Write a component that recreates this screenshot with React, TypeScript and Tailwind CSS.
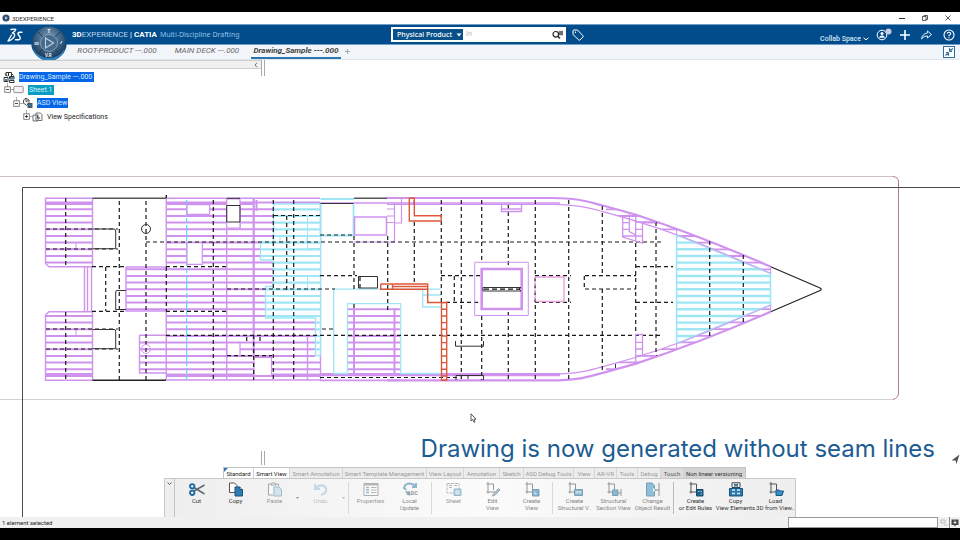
import type { ReactNode } from 'react';
import clsx from 'clsx';

// ─── Drawing geometry ────────────────────────────────────────────────────────

const STEP = 20 / 3;
const PURPLE = '#cf93ee';
const CYAN = '#9fe6f5';
const ORANGE = '#e0583a';

// [x1, x2, y1, y2]
type Area = [number, number, number, number];

// Every plank sits on one shared grid, so areas only need their bounds.
function planks(areas: Area[]) {
  let d = '';
  for (const [x1, x2, y1, y2] of areas) {
    for (let k = -1; k <= 25; k++) {
      const y = 209.3 + k * STEP;
      if (y >= y1 && y <= y2) d += `M${x1} ${y.toFixed(1)}H${x2}`;
    }
  }
  return d;
}

const PURPLE_PLANKS: Area[] = [
  [45, 92.5, 198, 266],
  [45, 92.5, 312, 380],
  [126, 166, 267, 311],
  [166, 320, 198, 206],
  [166, 273, 206, 241],
  [166, 260, 242, 260],
  [166, 273, 260, 286],
  [166, 265, 286, 318],
  [166, 315, 318, 356],
  [166, 320, 356, 377],
  [139.5, 166, 336, 373],
  [347.5, 400.5, 308, 374],
];

const CYAN_PLANKS: Area[] = [
  [273.5, 320.5, 207, 242],
  [260.5, 320.5, 242, 260],
  [273.5, 320.5, 260, 286],
  [265.5, 320.5, 286, 318],
  [315.5, 320.5, 318, 355],
];

// vertical frames: x, y1, y2
const FRAMES = [
  [65.7, 198, 267], [65.7, 312, 380], [105.7, 267, 311], [119.3, 201, 380], [146, 201, 380],
  [166.3, 267, 311], [213.3, 200, 380], [253.7, 335, 380], [273.3, 200, 380], [286.7, 216, 290],
  [293.7, 200, 380], [354, 236, 290], [354, 304, 310], [387.7, 236, 310], [414.3, 222, 284],
  [414.3, 200, 206], [441.3, 200, 302], [454.3, 276, 302], [461.3, 200, 380], [481.7, 200, 262],
  [481.7, 316, 380], [508.3, 205, 268], [508.3, 312, 380], [535.3, 200, 380], [568.7, 200, 380],
  [584.3, 276, 289], [602.3, 206, 276], [602.3, 289, 372], [635.7, 243, 335], [656, 222, 356],
  [709.7, 241, 337], [743.3, 255, 323],
];

// horizontal frames: y, x1, x2
const DECKS = [
  [229, 46, 118], [249, 46, 118], [329, 46, 118], [349, 46, 118],
  [266.7, 92, 126], [266.7, 166, 226], [311.3, 92, 126], [311.3, 166, 226],
  [242, 146, 662], [335.3, 166, 662], [289, 227, 335], [215.5, 274, 320],
  [275.7, 320, 357], [329, 322, 335], [355.7, 227, 272], [235, 320, 354],
  [275.7, 441, 482], [302.3, 446, 482], [275.7, 535, 571], [302.3, 535, 571],
  [275.7, 585, 636], [289, 585, 636], [266.7, 636, 673], [302.3, 636, 673],
  [377.5, 320, 460],
];

const OUTER = 'M387 198H552C580 198 590 202.500 603 205.500L636 214.800Q700 236 770.700 266.700';
const INNER = 'M387 204.300H552C580 205 590 208 603 211.700Q660 227 710 247.700L770.700 273.300';
const BAND = 'M560 198C580 198 590 202 603 205.500L636 214.800Q700 236 770.700 266.700V273.300L710 247.700Q660 227 603 211.700L560 205Z';

function HullSide() {
  return (
    <>
      <path d={OUTER} strokeWidth="2.200" />
      <path d={INNER} strokeWidth="1.2" />
      <path d="M320 203H560" strokeWidth="1.6" />
      <path d="M676.600 228.300V235" />
      <g clipPath="url(#band)">
        <path d={planks([[606, 771, 209, 275]])} strokeWidth="1.8" />
      </g>
    </>
  );
}

function DeckPlan() {
  return (
    <svg viewBox="0 60 960 457" className="col-start-1 row-start-1 w-full self-start" fill="none" role="img" aria-label="Deck plan">
      <defs>
        <clipPath id="band"><path d={BAND} /></clipPath>
        <clipPath id="bow"><path d="M676.600 235L770.700 273.300V305L676.600 343.500Z" /></clipPath>
      </defs>

      {/* sheet border and view frame */}
      <path d="M0 176.500H893" stroke="#cbbfc0" />
      <path d="M893 176.500Q898.500 177 898.500 182V393Q898.500 398 893 399.500" stroke="#b5798a" />
      <path d="M0 399.500H893" stroke="#d2d2d2" />
      <path d="M22.500 517V187.500H960" stroke="#4a4a4a" />

      {/* stern and midship planking */}
      <g stroke={PURPLE}>
        <path d={planks(PURPLE_PLANKS)} strokeWidth="2" />
        <path d="M45.500 198.300H92.500V266.700H49L45.500 263.500ZM49 311.700H92.500V380.300H45.500V315ZM84.500 267V311M87.500 267V311M91.500 267V311" strokeWidth="1.4" />
        <path d="M45 204H92M45 374H92M166 204H253M166 374.500H320" strokeWidth="2" />
        <path d="M166.300 198.300H320M166.300 380H320M166.300 198V267M166.300 311V380M126 267V311H166M126 267H166M226.700 198V380M240 222V228M307.500 336V380M320.500 205V380M139.500 335.300H166M139.500 335V373H166" strokeWidth="1.4" />
        <path d="M253.700 198V357" strokeWidth="2.200" />
        <path d="M256.500 200V211" strokeWidth="2" />
        <path d="M66 242.500H76V248.500H66M66 329.500H76V335" />
        <path d="M354 308V374M394.500 308V374" strokeWidth="2" />
      </g>

      {/* hull */}
      <g stroke={PURPLE}>
        <HullSide />
        <g transform="translate(0 578.4) scale(1 -1)"><HullSide /></g>
        <path d="M320 374H560M320 380.300H400" strokeWidth="1.800" />
      </g>
      <path d="M92.500 198.300H166M354 198.300H387" stroke="#555" strokeWidth="1.4" />
      <path d="M92.500 380.300H166M166.300 195V198" stroke="#222" strokeWidth="1.4" />

      {/* cyan panels */}
      <g stroke={CYAN}>
        <path d="M273.500 204H320.500V355.500H315.500V318H265.500V286.500H273.500V260H260.500V242H273.500Z" fill="#fff" strokeWidth="1.300" />
        <path d={planks(CYAN_PLANKS)} strokeWidth="2.200" />
        <path d="M307.500 216V248.500H320M280 237V242H307V237M307.500 276V289" />
        <path d="M320.500 199H354M320.500 235.500H353.500V203M320.500 203V235" strokeWidth="1.800" />
        <path d="M333.700 289.200H422.700V307H441M422.700 295H441M425 289.200H441M333.700 289V373.500H347.500V303.700H400.700V373.500H441" strokeWidth="1.300" />
        <g clipPath="url(#bow)">
          <path d={planks([[676, 771, 235, 345]])} strokeWidth="2.400" />
        </g>
        <path d="M676.600 235V343.500M770.500 273.500V305" strokeWidth="1.600" />
        <path d="M676.600 235L770.500 273.500M676.600 343.500L770.500 305" stroke="#a9c9f2" strokeWidth="1.200" />
      </g>
      <path d="M186.700 200V380" stroke="#62d2f7" strokeWidth="1.200" strokeDasharray="16 2 5 2" />

      {/* openings */}
      <g fill="#fff" stroke={PURPLE} strokeWidth="1.200">
        <path d="M187 204.700H209.700V214.300H187ZM187 242.700H202.300V264.300H187ZM227 343H240V355.700H227ZM254 357.500H271.500V375.500H254Z" />
        <path d="M226.700 199H240V228H226.700Z" />
        <path d="M387 198.300H401.500V223H394.500M394.500 204V242H354M387 209H394M387 216H394M387 222.500H394" fill="none" />
        <path d="M354.500 217H386.500V235H354.500Z" strokeWidth="1.600" />
      </g>

      {/* dashed structure */}
      <g stroke="#1a1a1a" strokeWidth="1.200" strokeDasharray="4 3">
        <path d={FRAMES.map(([x, a, b]) => `M${x} ${a}V${b}`).join('')} />
        <path d={DECKS.map(([y, a, b]) => `M${a} ${y}H${b}`).join('')} />
        <path d="M246.700 337V341M260 337V341M360 277V288" />
      </g>

      <g stroke="#333">
        <path d="M226.700 205.500H240V222H226.700ZM226.700 198.300H240" />
        <path d="M92.500 229H114Q115.700 229 115.700 231V248.700H92.500M92.500 329.500H114Q115.700 329.500 115.700 331V348.700H92.500" />
        <path d="M126 290.500H117Q115.700 290.500 115.700 292V309.500H126" />
        <circle cx="146" cy="229" r="4.500" />
        <path d="M320.500 203.500H353.500M358.500 276.500H377.500V288H358.500Z" />
        <path d="M455.500 341V346.200H483.500V341M456 380V375.500H483.500V380M468 376V379M615.500 364V368" />
      </g>
      <circle cx="146" cy="349" r="4.500" stroke={PURPLE} />

      {/* hatch and deck fittings */}
      <g stroke={PURPLE}>
        <path d="M474.700 262.300H528.300V315.500H474.700Z" />
        <path d="M481.700 269H521.700V309H481.700Z" strokeWidth="2.600" />
        <path d="M501.500 205V211.500H521.500V205M501.500 209H521.500" strokeWidth="1.400" />
        <path d="M622.700 216V237L642.500 243V222M622.700 222.700H629.300M622.700 229.300H629.300M629.300 214V231.500L635.700 235M635.700 216V242M635.700 222H656M635.700 229.300H642.500M622.700 236H642.500" strokeWidth="1.300" />
        <path d="M635.700 362V334.500H642.500V356M635.700 342.300H642.500M635.700 349H642.500M635.700 355.700H656" strokeWidth="1.300" />
      </g>
      <path d="M483 287.500H521L519 289L521 291H483Z" stroke="#333" />
      <path d="M484 289.200H520" stroke="#111" strokeWidth="1.200" strokeDasharray="5 3" />
      <path d="M535 277H564V301.500H535Z" stroke="#e8a3dc" strokeWidth="1.400" />
      <path d="M535 279V302" stroke="#333" strokeDasharray="2 5" />

      {/* seam bulkheads */}
      <g stroke={ORANGE} strokeWidth="1.400">
        <path d="M409.300 198.300H414.300V215.700H441.300V221H409.300Z" />
        <path d="M380.700 284H427.700V302.500H446.700V380.300H441.500V302.500M427.700 289.300H380.700V284M392.500 284V289M392.500 286.500H427" />
        <path d={planks([[441.5, 446.7, 302, 380]])} />
      </g>

      {/* bow tip */}
      <path d="M770.700 266.700L819 287.500Q823.500 289.200 819 291L770.700 311.700" stroke="#222" strokeWidth="1.200" />
      <path d="M770.700 266.700V311.700" stroke={PURPLE} strokeDasharray="7 31" />
    </svg>
  );
}

// ─── Top bars ────────────────────────────────────────────────────────────────

function TitleBar() {
  return (
    <header className="flex h-[12px] items-center bg-white pl-[2px] text-[#333]">
      <svg viewBox="0 0 10 10" className="mr-[2px] size-[8px]">
        <circle cx="5" cy="5" r="4.500" fill="#34506e" />
        <path d="M4 3L7 5L4 7Z" fill="#dce7f1" />
      </svg>
      <span className="text-[6px]">3DEXPERIENCE</span>
      <div className="ml-auto flex items-center gap-[17px] pr-[9px] text-[#333]">
        <button aria-label="Minimize"><svg viewBox="0 0 6 6" className="size-[6px]" fill="none" stroke="currentColor"><path d="M0 3.500H6" /></svg></button>
        <button aria-label="Restore"><svg viewBox="0 0 6 6" className="size-[6px]" fill="none" stroke="currentColor"><path d="M.5 1.500H4V5.500H.5ZM2 1.500V.5H5.500V4.500H4" strokeWidth=".8" /></svg></button>
        <button aria-label="Close"><svg viewBox="0 0 6 6" className="size-[6px]" fill="none" stroke="currentColor"><path d="M.5 .5L5.500 5.500M5.500 .5L.5 5.500" strokeWidth=".8" /></svg></button>
      </div>
    </header>
  );
}

function Compass() {
  return (
    <button aria-label="Compass" className="absolute top-0 left-[31px] z-10">
      <svg viewBox="0 0 36 36" className="size-[36px]" fill="none">
        <defs>
          <radialGradient id="ring" cx=".5" cy=".35" r=".65">
            <stop offset="0" stopColor="#7d9cb8" />
            <stop offset=".55" stopColor="#3d6385" />
            <stop offset="1" stopColor="#16324f" />
          </radialGradient>
        </defs>
        <circle cx="18" cy="18" r="17" fill="url(#ring)" stroke="#0d4a80" strokeWidth="1.400" />
        <path d="M2.500 25A17 17 0 0 0 33.500 25Q28 33.500 18 33.500Q8 33.500 2.500 25" fill="#2b86c4" stroke="#2b86c4" />
        <path d="M7 7L13 13M29 7L23 13M7 29L13 23M29 29L23 23" stroke="#1d3a57" />
        <circle cx="18" cy="18" r="8.500" fill="#456a8c" stroke="#8faac2" strokeWidth=".8" />
        <path d="M14.500 13L22.500 18L14.500 23Z" stroke="#c3d2df" strokeWidth="1.100" />
        <path d="M16.500 4.500H19.500M18 4.500V8M29.500 19L31 16" stroke="#e5edf4" />
        <text x="3" y="20" fontSize="4" fontWeight="700" fill="#e5edf4">3D</text>
        <text x="14" y="32" fontSize="4.500" fontWeight="700" fill="#e5edf4">V.R</text>
      </svg>
    </button>
  );
}

function TopBar() {
  return (
    <div className="relative flex h-[21px] items-center border-y border-[#6f9fc6] bg-[#034c8c] text-white">
      <svg viewBox="0 0 16 14" className="ml-[7px] h-[14px] w-[16px]" fill="none" stroke="#fff" strokeLinecap="round" strokeLinejoin="round" role="img" aria-label="DS">
        <path d="M4 1.500Q7.500 .8 8.800 1.400Q8.500 3 5.500 5" strokeWidth="1.300" />
        <path d="M5.500 5Q8.500 5.500 7.300 8.500Q5.500 12 1 13L4.500 7" strokeWidth="1.300" />
        <path d="M15 4.300Q11.500 4 10.900 5.200Q10.800 6.400 12.300 8Q14.200 10.800 12 11.700H8.500" strokeWidth="1.400" />
      </svg>
      <Compass />
      <h1 className="ml-[49px] text-[8px] leading-[12px] whitespace-nowrap text-[#b9d8f0]">
        <b className="text-white">3D</b>EXPERIENCE <span className="text-white">|</span> <b className="text-white">CATIA</b>
        <span className="ml-[3px] font-['Noto_Sans',sans-serif] text-[7px] text-[#8fc3e6]">Multi-Discipline Drafting</span>
      </h1>

      <form className="mr-[6px] ml-auto flex h-[15px] w-[175px] items-center bg-white pl-[2px]">
        <select aria-label="Search type" className="h-[11px] w-[70px] shrink-0 appearance-none bg-[#075089] pl-[4px] font-['Noto_Sans',sans-serif] text-[7px] leading-[11px] font-medium text-white">
          <option>Physical Product</option>
        </select>
        <svg viewBox="0 0 6 4" className="pointer-events-none -ml-[7px] h-[4px] w-[6px] shrink-0"><path d="M.5 .5H5.500L3 3.500Z" fill="#fff" /></svg>
        <input aria-label="Search" placeholder="In" className="min-w-0 flex-1 pl-[4px] text-[7px] text-[#333] outline-none placeholder:text-[#b5b5b5]" />
        <button type="button" aria-label="Advanced search" className="mr-[3px]">
          <svg viewBox="0 0 11 9" className="h-[9px] w-[11px]" fill="none" stroke="#222">
            <circle cx="3.800" cy="4.300" r="2.800" strokeWidth="1.200" />
            <path d="M5.800 6.200L8 8.500" strokeWidth="1.400" />
            <path d="M7 2H11M7 4H11M8 .8V5.500M10 .8V5.500" strokeWidth=".8" />
          </svg>
        </button>
      </form>
      <button aria-label="Tags" className="mr-[236px]">
        <svg viewBox="0 0 12 12" className="size-[12px]" fill="none" stroke="#fff" strokeLinejoin="round">
          <path d="M1 2Q1 1 2 1L5.500 1L11 6.800Q11.500 7.400 11 8L8 11Q7.400 11.400 6.800 11L1 5.500Z" />
          <circle cx="3.400" cy="3.300" r=".7" fill="#fff" stroke="none" />
        </svg>
      </button>
      <button className="mt-[8px] flex items-center gap-[2px] text-[7px] leading-[10px] font-medium whitespace-nowrap text-[#d8e8f5]">
        Collab Space
        <svg viewBox="0 0 6 4" className="h-[4px] w-[6px]" fill="none" stroke="#fff"><path d="M.5 .8L3 2.800L5.500 .8" /></svg>
      </button>
      <div className="flex items-center gap-[10px] pr-[5px] pl-[7px]">
        <button aria-label="Profile">
          <svg viewBox="0 0 16 13" className="h-[13px] w-[16px]" fill="none" stroke="#fff">
            <circle cx="6" cy="7" r="4.800" />
            <circle cx="6" cy="5.600" r="1.500" fill="#fff" stroke="none" />
            <path d="M3 9.800Q3.500 7.600 6 7.600Q8.500 7.600 9 9.800Z" fill="#fff" stroke="none" />
            <circle cx="12.500" cy="3.500" r="3" fill="#c9cbdc" stroke="none" />
          </svg>
        </button>
        <button aria-label="Add"><svg viewBox="0 0 10 10" className="-ml-[2px] size-[10px]" stroke="#fff" strokeWidth="1.600"><path d="M5 0V10M0 5H10" /></svg></button>
        <button aria-label="Share">
          <svg viewBox="0 0 13 11" className="h-[10px] w-[13px]" fill="none" stroke="#fff" strokeLinejoin="round"><path d="M7.500 1L12 5L7.500 8.800V6.500Q3.500 6.300 1 9.800Q2 4 7.500 3.300Z" /></svg>
        </button>
        <button aria-label="Help">
          <svg viewBox="0 0 12 12" className="size-[12px]" fill="none" stroke="#fff">
            <circle cx="6" cy="6" r="5" strokeWidth="1.100" />
            <path d="M4.300 4.800Q4.300 3.200 6 3.200Q7.700 3.200 7.700 4.700Q7.700 5.500 6 6.400V7.200M6 8.200V9.300" strokeWidth="1.100" />
          </svg>
        </button>
      </div>
    </div>
  );
}

const DOCS = [
  { name: 'ROOT-PRODUCT ---.000', className: 'w-[98px]' },
  { name: 'MAIN DECK ---.000', className: 'w-[82px]' },
];

function DocTabs() {
  return (
    <nav className="flex h-[15px] items-end border-b border-[#dfe5ec] bg-[#f2f5f9] pl-[68px] text-[8px] leading-[12px] whitespace-nowrap text-[#666] italic">
      {DOCS.map((d) => (
        <button key={d.name} className={clsx('h-[14px] border-b-2 border-transparent text-center', d.className)}>{d.name}</button>
      ))}
      <button className="ml-[3px] h-[14px] w-[90px] border-b-2 border-[#2a77b0] text-center font-bold text-[#444]">Drawing_Sample ---.000</button>
      <button aria-label="New tab" className="mb-[4px] ml-[3px]">
        <svg viewBox="0 0 7 7" className="size-[7px]" stroke="#999"><path d="M3.500 1V6M1 3.500H6" strokeWidth=".8" /></svg>
      </button>
      <button aria-label="Full screen" className="mr-[5px] mb-px ml-auto">
        <svg viewBox="0 0 12 12" className="size-[12px]" fill="none" stroke="#2d6d9e">
          <rect x=".5" y=".5" width="11" height="11" fill="#fff" />
          <path d="M6.500 5.500V3L8 4.200L9.800 2.500M6.500 5.500H9M5.500 6.500V9L4.200 7.800L2.500 9.500M5.500 6.500H3" strokeWidth="1.200" />
        </svg>
      </button>
    </nav>
  );
}

// ─── Feature tree ────────────────────────────────────────────────────────────

function Toggle({ open }: { open: boolean }) {
  return (
    <svg viewBox="0 0 11 13" className="h-[13px] w-[11px]" fill="none" stroke="#666" strokeWidth=".8">
      <path d="M3.500 0V4M6.500 6.500H11" stroke="#999" />
      <rect x=".8" y="3.800" width="5.500" height="5.500" fill="#fff" />
      <path d={open ? 'M2 6.500H5' : 'M2 6.500H5M3.500 5V8'} stroke="#222" />
    </svg>
  );
}

function Tree() {
  return (
    <ul className="pt-px text-[7px] leading-[10px] whitespace-nowrap">
      <li className="flex h-[13px] items-center pl-[3px]">
        <svg viewBox="0 0 12 12" className="mr-[4px] size-[12px]" fill="none" stroke="#333">
          <path d="M3 5V1.500H8.500V5M5.500 1V5M1 6.500H5V10.500H1ZM6.500 5.500H11V8H6.500ZM6.500 9.500H11V11.500H6.500Z" />
          <path d="M2 2.500L4.500 5.500M8 2L10.500 4.500" />
          <path d="M7 6H10.500V7.500H7ZM2 8H4V10H2Z" fill="#2d7fb2" stroke="none" />
        </svg>
        <button className="bg-[#0566e8] pr-[2px] text-[#dceaff]">Drawing_Sample ---.000</button>
      </li>
      <li className="flex h-[13px] items-center pl-[4px]">
        <Toggle open />
        <svg viewBox="0 0 14 10" className="-ml-[2px] h-[9px] w-[11px]"><rect x="1" y="1" width="12" height="8" rx="1" fill="#f4f0f4" stroke="#777" /></svg>
        <button className="ml-[4px] bg-[#0a9dc4] px-px text-[#d9f3fa]">Sheet.1</button>
      </li>
      <li className="flex h-[14px] items-center pl-[13px]">
        <Toggle open />
        <svg viewBox="0 0 11 12" className="-ml-[2px] h-[12px] w-[11px]" fill="none" stroke="#555">
          <path d="M1.500 3L4 1L7 3V6L4.500 8.500L1.500 6ZM4 1V4.500L7 3" fill="#eee" />
          <rect x="6" y="6.500" width="4" height="4" fill="#2f7496" />
        </svg>
        <button className="ml-[4px] bg-[#0566e8] pr-px text-[#dceaff]">ASD View</button>
      </li>
      <li className="flex h-[13px] items-center pl-[23px]">
        <Toggle open={false} />
        <svg viewBox="0 0 11 10" className="-ml-[2px] h-[10px] w-[11px]" fill="#f5f5f5" stroke="#777">
          <path d="M1 3H6V9H1ZM4 1H8.500L10 2.500V8.500H4Z" />
          <path d="M5.500 3.500V6H8" fill="none" stroke="#444" />
        </svg>
        <button className="ml-[4px] text-[#222]">View Specifications</button>
      </li>
    </ul>
  );
}

// ─── Ribbon ──────────────────────────────────────────────────────────────────

const RIBBON_TABS = [
  { label: 'Standard', className: 'w-[30px] bg-white text-[#222]' },
  { label: 'Smart View', className: 'w-[36px] bg-white text-[#222]' },
  { label: 'Smart Annotation', className: 'w-[53px]' },
  { label: 'Smart Template Management', className: 'w-[84px]' },
  { label: 'View Layout', className: 'w-[37px]' },
  { label: 'Annotation', className: 'w-[36px]' },
  { label: 'Sketch', className: 'w-[24px]' },
  { label: 'ASD Debug Tools', className: 'w-[50px]' },
  { label: 'View', className: 'w-[21px]' },
  { label: 'AR-VR', className: 'w-[22px]' },
  { label: 'Tools', className: 'w-[21px]' },
  { label: 'Debug', className: 'w-[23px]' },
  { label: 'Touch', className: 'w-[23px] bg-[#dcdcdc] text-[#555]' },
  { label: 'Non linear versioning', className: 'w-[61px] bg-[#d3d3d3] text-[#333]' },
];

const AXES = <path d="M3 0V10H10M1.500 2H8.500V8M1.500 10H3M3 10V11.500" stroke="#555" />;

const ICONS: Record<string, ReactNode> = {
  cut: (
    <>
      <path d="M15.500 3L5 9M15.500 12L5 5.500" stroke="#5d6b76" strokeWidth="1.500" />
      <circle cx="3.200" cy="4.300" r="2.200" stroke="#1e6c9e" strokeWidth="1.900" />
      <circle cx="3.200" cy="10.800" r="2.200" stroke="#1e6c9e" strokeWidth="1.900" />
    </>
  ),
  copy: (
    <>
      <path d="M1.500 1H6.500L9 3.500V10.500H1.500Z" fill="#fff" stroke="#555" />
      <path d="M7 5H12L14.500 7.500V14H7Z" fill="#2d7db3" stroke="#1c5379" />
      <path d="M12 5V7.500H14.500" fill="#fff" stroke="#1c5379" />
    </>
  ),
  paste: (
    <>
      <path d="M4 2H1.500V13H6M9 2H11.500V4M4 3Q4 .8 6.500 .8Q9 .8 9 3Z" fill="#fff" stroke="#555" />
      <path d="M7 5H12L14.500 7.500V14H7Z" fill="#b5d3e6" stroke="#4e86ab" />
    </>
  ),
  undo: <path d="M2 2V7H7M2.500 6.500Q6 2.500 10 3.500Q14 5 13 9Q12 12 8 13" stroke="#5a97c0" strokeWidth="2.200" />,
  properties: (
    <>
      <path d="M1 1.500H15V13.500H1Z" fill="#fff" stroke="#666" />
      <path d="M1 1.500H15V3.500H1Z" fill="#777" />
      <path d="M3 5.500H6M3 8H6M3 10.500H6" stroke="#3b82ae" strokeWidth="1.600" />
      <path d="M8 5.500H13.500M8 8H13.500M8 10.500H13.500" stroke="#777" />
    </>
  ),
  update: (
    <>
      <path d="M2 7Q2 2 7 1.500Q11 1.500 13 4M14 1V5H10M2 5L4 8M4 9Q5 12 8 13" stroke="#4a8cb5" strokeWidth="2" />
      <text x="5" y="13" fontSize="5.500" fontWeight="700" fill="#555">ADC</text>
    </>
  ),
  sheet: (
    <>
      <path d="M1 1.500H13V11H1ZM3 3.500H6M8 3.500H11M3 5.500H6" stroke="#777" strokeDasharray="3 1" />
      <path d="M8 7H15V13.500H8Z" fill="#6da8cc" stroke="#3f7da5" />
      <path d="M10 9V11.500H13V9Z" stroke="#e6f1f8" strokeWidth=".8" />
    </>
  ),
  edit: (
    <>
      {AXES}
      <path d="M8 12.500L13.500 6.500L15 8L9.500 13.500L7.500 14Z" fill="#6fa9cf" stroke="#555" strokeWidth=".8" />
    </>
  ),
  view: (
    <>
      {AXES}
      <path d="M8.500 7.500H15V14H8.500Z" fill="#3a86b5" stroke="#28678f" />
      <path d="M10 12H13M11 9.500V12" stroke="#dcebf5" strokeWidth=".8" />
    </>
  ),
  structural: (
    <>
      {AXES}
      <path d="M7.500 7.500H15.500V13.500H7.500Z" fill="#4a90bb" stroke="#28678f" />
      <path d="M8.500 10H14.500M10 9V12M13 9V12" stroke="#dcebf5" strokeWidth=".8" />
    </>
  ),
  section: (
    <>
      {AXES}
      <path d="M6.500 8H12V13.500H6.500Z" fill="#4a90bb" stroke="#28678f" />
      <path d="M12 11H15M15 7V14" stroke="#555" />
    </>
  ),
  change: (
    <>
      <path d="M1.500 1H7L9.500 3.500V14H1.500Z" fill="#4f9cc6" stroke="#28678f" />
      <path d="M10 8H14M14 1V14" stroke="#777" strokeWidth="1.300" />
      <path d="M8 5L11 8L8 11" fill="#cfe3ef" stroke="#28678f" strokeWidth=".8" />
    </>
  ),
  rules: (
    <>
      {AXES}
      <path d="M8.500 7.500H15V14H8.500Z" fill="#1c628f" stroke="#174c70" />
      <path d="M10 9.500H11.500M12.500 12H14M12.500 9.500H14" stroke="#9fd0ea" />
    </>
  ),
  elements: (
    <>
      <path d="M4 .8H12V5.500H4Z" fill="#fff" stroke="#444" />
      <path d="M6 2L10 4.500M10 2L6 4.500" stroke="#1c628f" strokeWidth="1.300" />
      <path d="M1.500 6.500H14.500V14H1.500Z" fill="#2b7aad" stroke="#1b567f" />
      <path d="M4 8H12M4 11.500H12" stroke="#d9ebf6" strokeWidth="1.500" strokeDasharray="3 2" />
    </>
  ),
  load: (
    <>
      {AXES}
      <path d="M8 8H11L12 9H15.500L14 13.500H8Z" fill="#3a8fc4" stroke="#1b567f" />
    </>
  ),
};

type Tool = { icon: string; lines: string[]; tone: string; menu?: boolean };

const GROUPS: { className: string; tools: Tool[] }[] = [
  {
    className: 'w-[173px]',
    tools: [
      { icon: 'cut', lines: ['Cut'], tone: 'text-[#333]' },
      { icon: 'copy', lines: ['Copy'], tone: 'text-[#333]' },
      { icon: 'paste', lines: ['Paste'], tone: 'text-[#333] opacity-50', menu: true },
      { icon: 'undo', lines: ['Undo'], tone: 'text-[#333] opacity-30', menu: true },
    ],
  },
  {
    className: 'w-[83px] border-l border-[#d9d9d9]',
    tools: [
      { icon: 'properties', lines: ['Properties'], tone: 'text-[#333] opacity-50' },
      { icon: 'update', lines: ['Local', 'Update'], tone: 'text-[#333] opacity-60' },
    ],
  },
  {
    className: 'w-[121px] border-l border-[#d9d9d9]',
    tools: [
      { icon: 'sheet', lines: ['Sheet'], tone: 'text-[#333] opacity-50' },
      { icon: 'edit', lines: ['Edit', 'View'], tone: 'text-[#333] opacity-60' },
      { icon: 'view', lines: ['Create', 'View'], tone: 'text-[#333] opacity-60' },
    ],
  },
  {
    className: 'w-[121px] border-l border-[#d9d9d9]',
    tools: [
      { icon: 'structural', lines: ['Create', 'Structural V..'], tone: 'text-[#333] opacity-60' },
      { icon: 'section', lines: ['Structural', 'Section View'], tone: 'text-[#333] opacity-60' },
      { icon: 'change', lines: ['Change', 'Object Result'], tone: 'text-[#333] opacity-60' },
    ],
  },
  {
    className: 'w-[122px] gap-px border-l border-[#bbb]',
    tools: [
      { icon: 'rules', lines: ['Create', 'or Edit Rules'], tone: 'text-[#333]' },
      { icon: 'elements', lines: ['Copy', 'View Elements'], tone: 'text-[#333]' },
      { icon: 'load', lines: ['Load', '3D from View..'], tone: 'text-[#333]' },
    ],
  },
];

function Ribbon() {
  return (
    <div className="mx-auto w-[632px]">
      <div className="ml-[59px] flex w-[523px] border border-b-0 border-[#c4c4c4] bg-[#ececec]">
        {RIBBON_TABS.map((t, i) => (
          <button
            key={t.label}
            className={clsx(
              'relative h-[10px] shrink-0 border-r border-[#d5d5d5] text-center text-[6px] leading-[9px] whitespace-nowrap',
              i > 1 && i < 12 && 'text-[#999]',
              t.className,
            )}
          >
            {i === 0 && <svg viewBox="0 0 4 4" className="absolute top-0 left-0 size-[4px]"><path d="M0 0H4L0 4Z" fill="#2b75b5" /></svg>}
            {t.label}
          </button>
        ))}
      </div>
      <div className="flex h-[39px] border border-b-0 border-[#c8c8c8] bg-gradient-to-r from-[#eeeeee] via-[#fbfbfb] to-[#eeeeee]">
        <button aria-label="Collapse ribbon" className="flex w-[10px] shrink-0 justify-center border-r border-[#c4c4c4] pt-[3px]">
          <svg viewBox="0 0 5 4" className="h-[4px] w-[5px]" fill="none" stroke="#666"><path d="M.5 .5L2.500 2.500L4.500 .5" /></svg>
        </button>
        {GROUPS.map((g, i) => (
          <div key={i} className={clsx('my-[3px] flex shrink-0 pl-[2px]', g.className)}>
            {g.tools.map((t) => (
              <div key={t.icon} className={clsx('flex items-center', t.tone)}>
                <button className="flex w-[39px] flex-col items-center self-start text-[6px] leading-[7px] whitespace-nowrap">
                  <svg viewBox="0 0 16 15" className="h-[15px] w-[16px] shrink-0" fill="none">{ICONS[t.icon]}</svg>
                  {t.lines.map((l) => <span key={l}>{l}</span>)}
                </button>
                {t.menu && (
                  <button aria-label={`${t.lines[0]} options`} className="flex w-[7px] justify-center">
                    <svg viewBox="0 0 5 4" className="h-[4px] w-[5px]"><path d="M1 1H4L2.500 3Z" fill="#333" /></svg>
                  </button>
                )}
              </div>
            ))}
          </div>
        ))}
      </div>
    </div>
  );
}

function StatusBar() {
  return (
    <footer className="flex h-[11px] items-center bg-[#f0f0f0] pl-[2px] text-[6px] leading-[10px] text-[#222]">
      <span>1 element selected</span>
      <input aria-label="Command" className="ml-auto h-[11px] w-[150px] border border-[#999] bg-white px-1 outline-none" />
      <button aria-label="Dialog" className="flex w-[11px] justify-center">
        <svg viewBox="0 0 8 8" className="size-[8px]" fill="none" stroke="#bbb"><path d="M1 1H5V4H1ZM4 6H7.500" /></svg>
      </button>
      <button aria-label="Notifications" className="flex h-[11px] w-[11px] items-center justify-center border-l border-[#888]">
        <svg viewBox="0 0 8 8" className="size-[8px]"><path d="M.5 .5H7.500V6H5L4 7.500L3 6H.5Z" fill="#444" /><path d="M4 1.500V5M2.500 3.500H5.500" stroke="#fff" strokeWidth=".8" /></svg>
      </button>
    </footer>
  );
}

// ─── App ─────────────────────────────────────────────────────────────────────

export default function App() {
  return (
    <div className="flex min-h-screen flex-col bg-black py-[12px] font-['Roboto','Noto_Sans',sans-serif]">
      <TitleBar />
      <TopBar />
      <DocTabs />
      <main className="relative grid flex-1 overflow-hidden bg-white">
        <DeckPlan />
        <div className="z-10 col-start-1 row-start-1 flex flex-col">
          <div className="flex items-start">
            <div className="flex h-[9px] w-[261px] items-center justify-end border-y border-[#cfcfcf] bg-[#f0f0f0] pr-[3px]">
              <button aria-label="Collapse tree"><svg viewBox="0 0 4 6" className="block h-[6px] w-[4px]" fill="none" stroke="#555"><path d="M3 .8L1 3L3 5.200" strokeWidth=".8" /></svg></button>
            </div>
            <div className="-mb-[7px] h-[16px] w-[4px] border-x border-[#aaa]" />
          </div>
          <Tree />
          <div className="mt-auto flex items-center justify-end gap-[16px] pb-px">
            <p className="font-['Inter','Open_Sans',sans-serif] text-[24px] leading-[32px] whitespace-nowrap text-[#1c5c93]">
              Drawing is now generated without seam lines
            </p>
            <svg viewBox="0 0 9 12" className="mt-[22px] h-[12px] w-[9px]"><path d="M8.500 .5L5.500 10L4.500 6.500L.5 6.500Z" fill="#555" /></svg>
          </div>
          <Ribbon />
        </div>
        <div className="absolute top-[391px] left-[261px] h-[14px] w-[4px] border-x border-[#aaa]" />
        <svg viewBox="0 0 7 10" className="absolute top-[353px] left-[470px] h-[10px] w-[7px]" fill="#fff" stroke="#333" strokeWidth=".8"><path d="M1 .8V8L2.700 6.500L4 9.300L5 8.800L4 6.200H6Z" /></svg>
      </main>
      <StatusBar />
    </div>
  );
}
